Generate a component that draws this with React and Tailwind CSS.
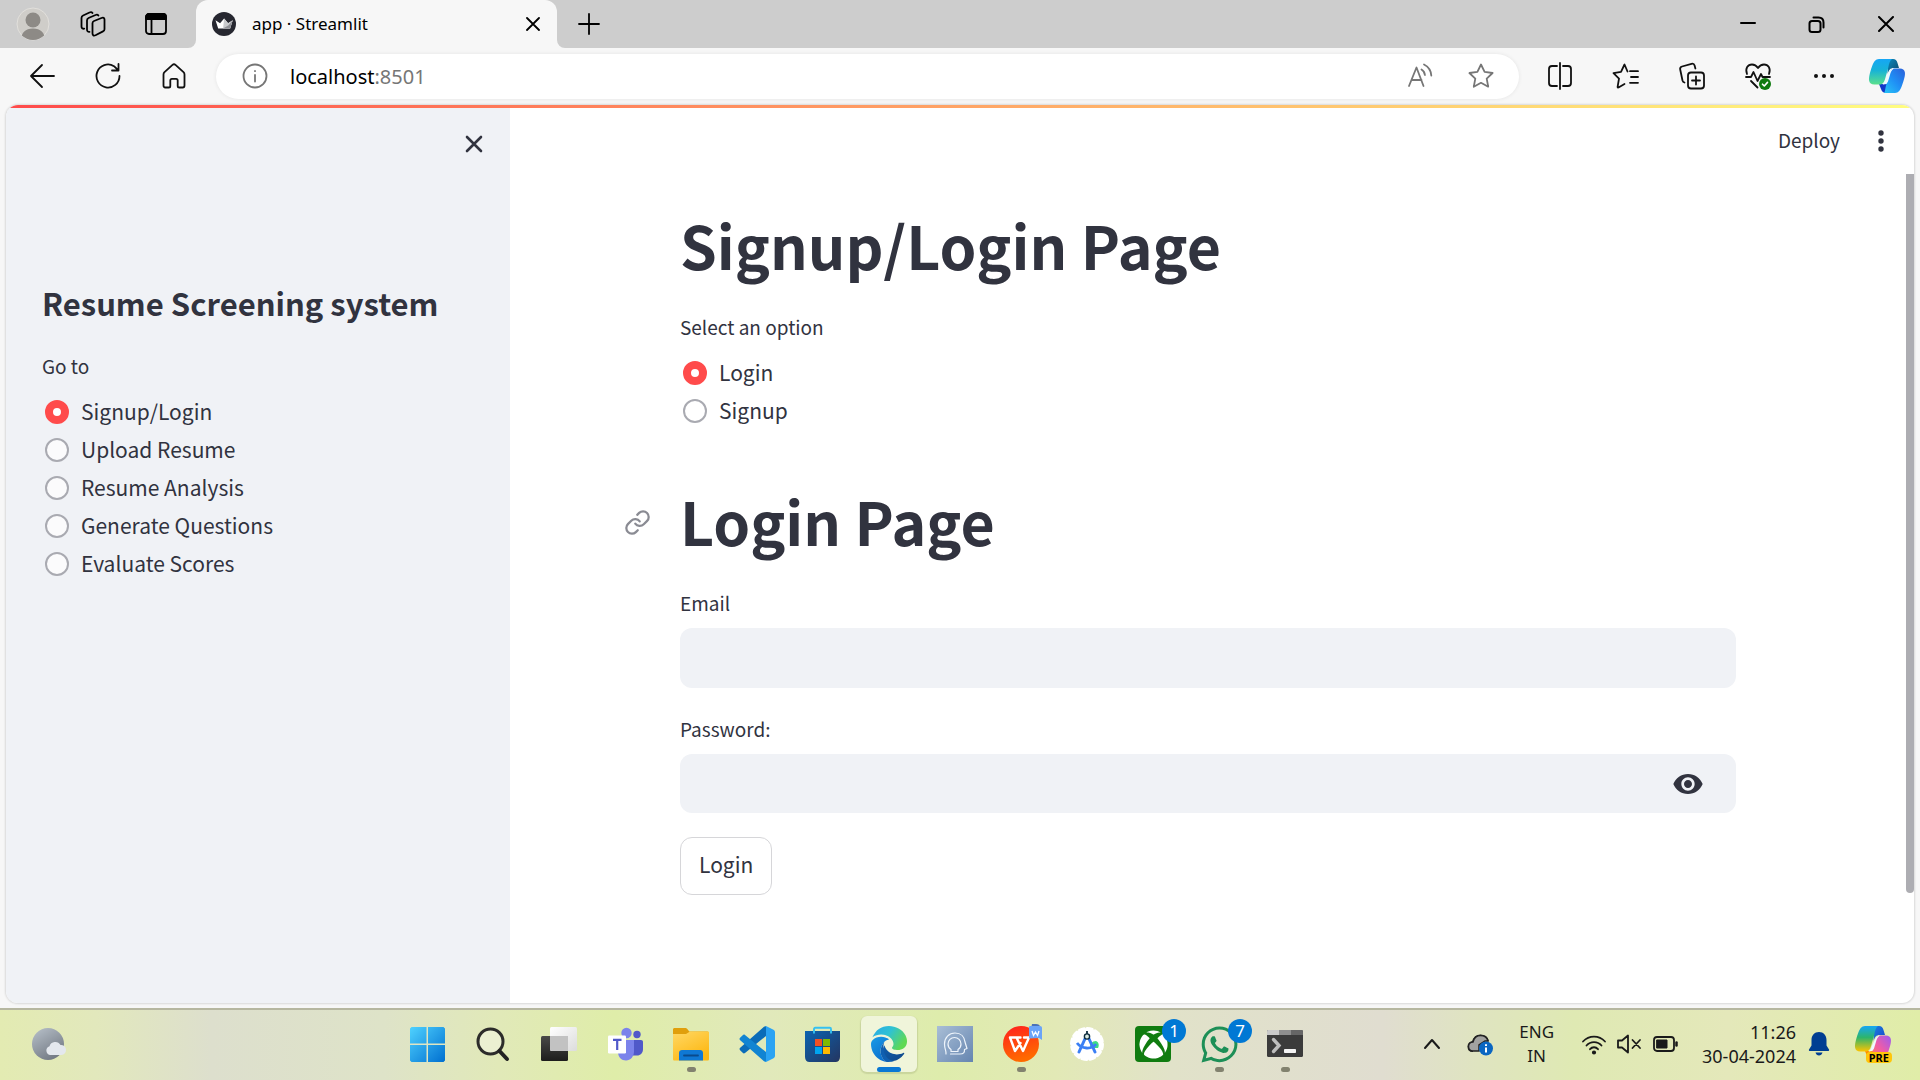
import React, { useState } from "react";
import { Link as LinkIcon } from "lucide-react";
import { FaWhatsapp, FaXbox } from "react-icons/fa";
import { MdVisibility } from "react-icons/md";

function Line({ size = 28, w = 1.8, className = "", children, box = 28 }) {
  return (
    <svg
      width={size}
      height={size}
      viewBox={`0 0 ${box} ${box}`}
      fill="none"
      stroke="currentColor"
      strokeWidth={w}
      strokeLinecap="round"
      strokeLinejoin="round"
      className={className}
      aria-hidden="true"
    >
      {children}
    </svg>
  );
}

function IconButton({ label, className = "", children }) {
  return (
    <button type="button" aria-label={label} className={`flex h-12 shrink-0 items-center justify-center ${className}`}>
      {children}
    </button>
  );
}

/* ---------- Browser chrome ---------- */

function Avatar() {
  return (
    <svg width="34" height="34" viewBox="0 0 34 34" aria-hidden="true">
      <defs>
        <clipPath id="avatar">
          <circle cx="17" cy="17" r="16" />
        </clipPath>
      </defs>
      <circle cx="17" cy="17" r="16" fill="#cfcdc9" stroke="#e2e0dc" />
      <g clipPath="url(#avatar)" fill="#8d8a86">
        <circle cx="17" cy="13" r="7.5" />
        <path d="M5 34c0-8 4-12.500 12-12.500S29 26 29 34z" />
      </g>
    </svg>
  );
}

function StreamlitCrown() {
  return (
    <svg width="24" height="24" viewBox="0 0 24 24" aria-hidden="true">
      <circle cx="12" cy="12" r="12" fill="#262730" />
      <path d="M3.500 8.200l4.600 3 4-4.700 4 4.700 4.600-3-2.600 8.300H6.200z" fill="#fff" />
      <path d="M12.100 6.500l4 4.700 4.600-3-2.600 8.300h-7z" fill="#c9cacd" />
      <path d="M20.700 8.200l-2.600 8.300h-7l5.500-3.300z" fill="#8f9096" />
    </svg>
  );
}

function TabBar() {
  return (
    <div className="flex h-12 items-center bg-[#cdcdcd] text-black">
      <IconButton label="Profile" className="ml-4 w-[34px]"><Avatar /></IconButton>
      <IconButton label="Workspaces" className="ml-7 w-[30px]">
        <Line size={26} box={26}>
          <path d="M12.500 12.200c0-1.100.5-1.800 1.500-2.200l7.500-3c1.700-.7 3-.1 3 1.600v9.600c0 1.100-.5 1.800-1.500 2.200l-7.500 3.800c-1.800.8-3 .1-3-1.600z" />
          <path d="M9.500 20.800c-1.500.2-2.500-.6-2.500-2.200V9.500c0-1.200.5-2 1.600-2.500l6.900-3c1.300-.6 2.300-.3 2.900.6" />
          <path d="M4.200 17.700C2.500 17.900 1.500 17 1.500 15.400V7c0-1.200.5-2 1.600-2.500l6.400-3c1.300-.6 2.400-.3 3 .5" />
        </Line>
      </IconButton>
      <IconButton label="Tab actions" className="ml-9 w-6">
        <Line size={24} box={24}>
          <rect x="2" y="2" width="20" height="20" rx="3" />
          <path d="M2 7V5a3 3 0 013-3h14a3 3 0 013 3v2z" fill="currentColor" />
          <path d="M7.500 8v13.500" />
        </Line>
      </IconButton>
      <div className="ml-5 h-2 w-2 self-end overflow-hidden bg-[#f7f7f7]">
        <div className="h-2 w-2 rounded-br-lg bg-[#cdcdcd]" />
      </div>
      <div className="flex h-12 w-[361px] items-center rounded-t-xl bg-[#f7f7f7] pr-3 pl-4">
        <StreamlitCrown />
        <span className="ml-4 flex-1 text-[17px]">app · Streamlit</span>
        <button type="button" aria-label="Close tab" className="flex h-6 w-6 items-center justify-center">
          <Line size={14} box={14}><path d="M1 1l12 12M13 1L1 13" /></Line>
        </button>
      </div>
      <div className="h-2 w-2 self-end overflow-hidden bg-[#f7f7f7]">
        <div className="h-2 w-2 rounded-bl-lg bg-[#cdcdcd]" />
      </div>
      <IconButton label="New tab" className="ml-2 w-8">
        <Line size={22} box={22}><path d="M11 1v20M1 11h20" /></Line>
      </IconButton>
      <div className="ml-auto flex">
        <IconButton label="Minimize" className="w-[69px]">
          <Line size={16} box={16} w={2}><path d="M1 7h14" /></Line>
        </IconButton>
        <IconButton label="Restore" className="w-[69px]">
          <Line size={17} box={17} w={2}>
            <rect x="1.500" y="5" width="11" height="11" rx="2.500" />
            <path d="M5.500 1.500h5c3 0 5 2 5 5v5" />
          </Line>
        </IconButton>
        <IconButton label="Close window" className="w-[69px]">
          <Line size={16} box={16} w={2}><path d="M1 1l14 14M15 1L1 15" /></Line>
        </IconButton>
      </div>
    </div>
  );
}

function CopilotLogo({ colorful = false }) {
  const p = colorful ? "c" : "b";
  return (
    <svg width="38" height="36" viewBox="0 0 38 36" aria-hidden="true">
      <defs>
        <linearGradient id={`${p}1`} x1="0" y1="0" x2="0" y2="1">
          <stop offset="0" stopColor="#16a6f5" />
          <stop offset=".45" stopColor={colorful ? "#2db56b" : "#18b3d6"} />
          <stop offset="1" stopColor={colorful ? "#ffc400" : "#5be08c"} />
        </linearGradient>
        <linearGradient id={`${p}2`} x1="1" y1="0" x2="0" y2="1">
          <stop offset="0" stopColor={colorful ? "#9a5cf0" : "#2b5fd9"} />
          <stop offset=".5" stopColor={colorful ? "#ee5ca8" : "#1f8ff5"} />
          <stop offset="1" stopColor={colorful ? "#ff8a4c" : "#29c5f6"} />
        </linearGradient>
        <linearGradient id={`${p}3`} x1="0" y1="0" x2="1" y2="1">
          <stop offset="0" stopColor={colorful ? "#1a7fe0" : "#0c8bc0"} />
          <stop offset="1" stopColor={colorful ? "#1a46c8" : "#0c4468"} />
        </linearGradient>
      </defs>
      <path d="M11 26h10l-3 9c-2.500 0-4.200-1.500-5-4z" fill={colorful ? "#ff8a00" : "#1238c9"} />
      <path d="M20 1h5c2.500 0 3.800 1.500 4.500 4l1.500 5h-5c-4 0-5 2-6.500 6z" fill={`url(#${p}3)`} />
      <path d="M24 1H11C7.500 1 5.500 4 4 8.500 2 14 .5 20 1.200 23c.5 2.200 2 3.500 5 3.500h5c3.500 0 4.800-2 6-6l3-10.500C21 5.500 22 2 24 1z" fill={`url(#${p}1)`} />
      <path d="M16 35h11c3.500 0 5.500-3 7-7.500 2-5.500 3.500-10.500 2.800-13.500-.5-2.200-2-3.500-5-3.500h-5c-3.500 0-4.800 2-6 6L18 27.500C17 31.500 17 34 16 35z" fill={`url(#${p}2)`} />
      <path d="M20.500 15.500c1-3 2.500-5 5.500-5-2.500 1.300-3.200 3.500-4.200 7l-1.500 5c-1.100 3.500-2.500 4-5.800 4 1.800-1 2.500-2.700 3.300-5.500z" fill="#eefaff" />
    </svg>
  );
}

function Toolbar() {
  return (
    <div className="flex h-[57px] items-center bg-[#f7f7f7] pb-px text-[#111]">
      <IconButton label="Back" className="ml-5 w-11">
        <Line size={26} box={26}><path d="M25 13H2M13 2L2 13l11 11" /></Line>
      </IconButton>
      <IconButton label="Refresh" className="ml-[22px] w-11">
        <Line size={26} box={26}>
          <path d="M24.500 13A11.500 11.500 0 1119 3.200L23.500 7.500M23.500 1v6.500H17" />
        </Line>
      </IconButton>
      <IconButton label="Home" className="ml-[22px] w-11">
        <Line size={26} box={26}>
          <path d="M2.500 11.500c0-1 .4-1.700 1-2.300l8-7.300c1-.9 2-.9 3 0l8 7.300c.6.6 1 1.300 1 2.300V22.500c0 1.200-.6 2-1.800 2h-3.400c-1 0-1.600-.6-1.600-1.600V17.500c0-1-.6-1.600-1.600-1.600h-4.200c-1 0-1.600.6-1.600 1.600v5.400c0 1-.6 1.600-1.600 1.600H4.300c-1.200 0-1.800-.8-1.800-2z" />
        </Line>
      </IconButton>
      <div className="ml-5 flex h-[45px] flex-1 items-center rounded-full bg-white pr-6 pl-[26px] text-[#767676] shadow-[0_0_4px_rgba(0,0,0,0.08)]">
        <button type="button" aria-label="View site information">
          <Line size={26} box={26}>
            <circle cx="13" cy="13" r="11.500" />
            <path d="M13 12v6.500M13 8v.2" />
          </Line>
        </button>
        <span className="ml-[22px] flex-1 pt-px text-[20px] leading-7">
          <span className="text-black">localhost</span>:8501
        </span>
        <button type="button" aria-label="Read aloud" className="mr-[34px]">
          <Line size={26} box={26}>
            <path d="M2 23L9.500 4.500 16.500 23M4.500 17h10" />
            <path d="M14.500 6.500c2 1.200 3.200 3 3.400 5.500M17 1.500c4.500 2.300 7 6 7.300 11" />
          </Line>
        </button>
        <button type="button" aria-label="Favorite this page">
          <Line size={28} box={28}>
            <path d="M14 2.500l3.600 7.400 8 1.100-5.900 5.600 1.500 8.100-7.200-3.900-7.200 3.900 1.500-8.100L2.400 11l8-1.100z" />
          </Line>
        </button>
      </div>
      <IconButton label="Split screen" className="ml-[19px] w-11">
        <Line size={28}>
          <path d="M11 4H6a3 3 0 00-3 3v14a3 3 0 003 3h5M17 4h5a3 3 0 013 3v14a3 3 0 01-3 3h-5M14 1v26" />
        </Line>
      </IconButton>
      <IconButton label="Favorites" className="ml-[22px] w-11">
        <Line size={28}>
          <path d="M18 9.200h8M19 15h7M18 20.800h8M15.500 9.500l-3-7-3.500 7.400-7.500 1.200 5.500 5.500-1.400 8.300c0 .6.300.8.900.6l6-3.500" />
        </Line>
      </IconButton>
      <IconButton label="Collections" className="ml-[22px] w-11">
        <Line size={28}>
          <rect x="10" y="10.500" width="16" height="16" rx="3" />
          <path d="M18 14.500v8M14 18.500h8M6.500 20.500c-1-.3-1.700-1-2-2L2.200 7.500c-.3-1.500.4-2.600 1.800-3l9.500-2.700c1.500-.4 2.700.3 3.100 1.700l.8 3" />
        </Line>
      </IconButton>
      <IconButton label="Browser essentials" className="ml-[22px] w-11">
        <Line size={28}>
          <path d="M3 12C.8 6 4 2.500 8 2.500c2.500 0 4.500 1.300 6 3.500 1.500-2.200 3.500-3.500 6-3.500 4 0 7.200 3.500 5 9.500" />
          <path d="M2 15h5l2.500-5 4 9 3.500-7 1.500 3H26M7 19l6.500 6.500" />
          <circle cx="21" cy="22" r="6" fill="#0f7b0f" stroke="none" />
          <path d="M18.500 22.200l1.800 1.800 3.200-3.600" stroke="#fff" strokeWidth="1.600" />
        </Line>
      </IconButton>
      <IconButton label="Settings and more" className="ml-[22px] w-11">
        <svg width="22" height="6" viewBox="0 0 22 6" fill="currentColor" aria-hidden="true">
          <circle cx="3" cy="3" r="2" /><circle cx="11" cy="3" r="2" /><circle cx="19" cy="3" r="2" />
        </svg>
      </IconButton>
      <IconButton label="Copilot" className="mr-3.5 ml-[22px] w-[38px]"><CopilotLogo /></IconButton>
    </div>
  );
}

/* ---------- App ---------- */

function RadioGroup({ name, label, options }) {
  const [value, setValue] = useState(options[0]);
  return (
    <fieldset>
      <legend className="text-[19px] leading-7">{label}</legend>
      <div className="mt-[13px] pl-[3px]">
        {options.map((o) => (
          <label key={o} className="flex h-[38px] items-center gap-3 text-[21px] leading-8">
            <input
              type="radio"
              name={name}
              checked={value === o}
              onChange={() => setValue(o)}
              className="h-6 w-6 shrink-0 appearance-none rounded-full border-2 border-[#a9aab1] bg-white/70 checked:border-8 checked:border-[#ff4b4b] checked:bg-white"
            />
            <span className="pb-0.5">{o}</span>
          </label>
        ))}
      </div>
    </fieldset>
  );
}

function Sidebar() {
  return (
    <aside className="w-[504px] shrink-0 bg-[#f0f2f6] px-9 text-[#31333f]">
      <div className="flex h-[72px] items-center justify-end">
        <button type="button" aria-label="Close sidebar" className="-mr-4 flex h-8 w-8 items-center justify-center">
          <Line size={18} box={18} w={2.6}><path d="M2 2l14 14M16 2L2 16" /></Line>
        </button>
      </div>
      <h1 className="mt-[99px] text-[31px] leading-[48px] font-semibold">Resume Screening system</h1>
      <div className="mt-[25px]">
        <RadioGroup
          name="page"
          label="Go to"
          options={["Signup/Login", "Upload Resume", "Resume Analysis", "Generate Questions", "Evaluate Scores"]}
        />
      </div>
    </aside>
  );
}

function Main() {
  const [show, setShow] = useState(false);
  return (
    <main className="flex min-w-0 flex-1 flex-col text-[#31333f]">
      <header className="flex h-[66px] items-center justify-end pr-6">
        <button type="button" className="pb-0.5 text-[19px] leading-7">Deploy</button>
        <button type="button" aria-label="Main menu" className="ml-8 flex h-8 w-[18px] items-center justify-center">
          <svg width="6" height="22" viewBox="0 0 6 22" fill="currentColor" aria-hidden="true">
            <circle cx="3" cy="3" r="2.700" /><circle cx="3" cy="11" r="2.700" /><circle cx="3" cy="19" r="2.700" />
          </svg>
        </button>
      </header>
      <div className="flex flex-1">
        <div className="flex-1">
          <div className="mx-auto w-full max-w-[1056px] pt-[31px]">
            <h1 className="text-[59px] leading-20 font-bold">Signup/Login Page</h1>
            <div className="mt-7">
              <RadioGroup name="mode" label="Select an option" options={["Login", "Signup"]} />
            </div>
            <div className="relative mt-[51px]">
              <a href="#login-page" aria-label="Link to heading" className="absolute top-7 -left-14 text-[#8a8b93]">
                <LinkIcon size={27} strokeWidth={2} />
              </a>
              <h1 id="login-page" className="text-[59px] leading-20 font-bold">Login Page</h1>
            </div>
            <form onSubmit={(e) => e.preventDefault()}>
              <label htmlFor="email" className="mt-7 block text-[19px] leading-7">Email</label>
              <input id="email" type="text" className="mt-[11px] block h-[60px] w-full rounded-xl bg-[#f0f2f6] px-5 text-[21px] outline-none" />
              <label htmlFor="password" className="mt-[27px] block text-[19px] leading-7">Password:</label>
              <div className="mt-[11px] flex h-[59px] items-center rounded-xl bg-[#f0f2f6] pr-8">
                <input id="password" type={show ? "text" : "password"} className="h-full min-w-0 flex-1 bg-transparent px-5 text-[21px] outline-none" />
                <button type="button" aria-label="Show password" onClick={() => setShow(!show)}>
                  <MdVisibility size={32} />
                </button>
              </div>
              <button type="submit" className="mt-6 h-[58px] rounded-xl border border-[#d6d6d9] px-[18px] pb-1 text-[21px] leading-8">Login</button>
            </form>
          </div>
        </div>
        <div className="w-2">
          <div className="h-[719px] rounded-b-full bg-[#adadb2]" />
        </div>
      </div>
    </main>
  );
}

/* ---------- Taskbar ---------- */

function Weather() {
  return (
    <svg width="36" height="34" viewBox="0 0 36 34" aria-hidden="true">
      <defs>
        <linearGradient id="moon" x1="0" y1="0" x2=".6" y2="1">
          <stop offset="0" stopColor="#b9c2cb" /><stop offset="1" stopColor="#747b85" />
        </linearGradient>
      </defs>
      <circle cx="16" cy="17" r="16" fill="url(#moon)" />
      <path d="M18 28a4.500 4.500 0 01-.5-8.700A6 6 0 0128.500 18a5 5 0 011 10z" fill="#e4e8ee" />
    </svg>
  );
}

function WindowsLogo() {
  return (
    <svg width="35" height="35" viewBox="0 0 35 35" aria-hidden="true">
      <defs>
        <linearGradient id="win" gradientUnits="userSpaceOnUse" x1="0" y1="0" x2="35" y2="35">
          <stop offset="0" stopColor="#4fd2ff" /><stop offset="1" stopColor="#006fd0" />
        </linearGradient>
      </defs>
      <path d="M1.500 0H16.500V16.500H0V1.500zM18 0H33.500L35 1.500V16.500H18zM0 18H16.500V35H1.500L0 33.500zM18 18H35V33.500L33.500 35H18z" fill="url(#win)" />
    </svg>
  );
}

function SearchLogo() {
  return (
    <svg width="34" height="36" viewBox="0 0 34 36" aria-hidden="true">
      <circle cx="14.500" cy="15.500" r="12.500" fill="#ffffff" fillOpacity=".35" stroke="#2c2c2a" strokeWidth="3" />
      <path d="M23.500 25l7.500 8" stroke="#222" strokeWidth="4" strokeLinecap="round" />
    </svg>
  );
}

function TaskView() {
  return (
    <svg width="36" height="36" viewBox="0 0 36 36" aria-hidden="true">
      <defs>
        <linearGradient id="tvd" x1="0" y1="0" x2="0" y2="1">
          <stop offset="0" stopColor="#4a4a48" /><stop offset="1" stopColor="#1d1d1c" />
        </linearGradient>
        <linearGradient id="tvl" x1="0" y1="0" x2="1" y2="1">
          <stop offset="0" stopColor="#fff" /><stop offset="1" stopColor="#dcdcdc" />
        </linearGradient>
      </defs>
      <rect x="0" y="10" width="27" height="25" rx="1.500" fill="url(#tvd)" />
      <rect x="9" y="1" width="27" height="24" rx="1.500" fill="url(#tvl)" />
      <path d="M9 10h18v15H10.500L9 23.500z" fill="#c2c2c2" />
    </svg>
  );
}

function Teams() {
  return (
    <svg width="36" height="36" viewBox="0 0 36 36" aria-hidden="true">
      <circle cx="30" cy="8.500" r="3.700" fill="#5059c9" />
      <path d="M26 14h8c1.200 0 2 .8 2 2v7c0 4-2.500 6.500-6 6.500h-4z" fill="#5059c9" />
      <circle cx="19.500" cy="7" r="5.200" fill="#7b83eb" />
      <path d="M11 14h16v11.500c0 5-3.500 9-8 9s-8-3.500-8-8.500z" fill="#7b83eb" />
      <rect x="1" y="9.500" width="18" height="18" rx="1.200" fill="#fff" />
      <path d="M6 13.800h8.500M10.200 14v10" stroke="#5059c9" strokeWidth="2.200" />
    </svg>
  );
}

function Explorer() {
  return (
    <svg width="36" height="36" viewBox="0 0 36 36" aria-hidden="true">
      <defs>
        <linearGradient id="fold" x1="0" y1="0" x2=".6" y2="1">
          <stop offset="0" stopColor="#ffd865" /><stop offset="1" stopColor="#fdb813" />
        </linearGradient>
      </defs>
      <path d="M0 3.500C0 2.500.8 2 1.500 2H12c1 0 1.600.2 2.300 1l2 2.500H34c1 0 1.500.6 1.500 1.500v6H0z" fill="#e09f0c" />
      <path d="M0 8h13l4-2.500h18c.6 0 1 .4 1 1V33c0 1-.6 1.500-1.500 1.500h-33C.6 34.500 0 34 0 33z" fill="url(#fold)" />
      <path d="M6 34.500V27c0-2 1.200-3 3-3h18c1.800 0 3 1 3 3v7.500z" fill="#0f78d4" />
      <path d="M11 29.500h14" stroke="#0a4a8c" strokeWidth="1.800" strokeLinecap="round" />
    </svg>
  );
}

function VSCode() {
  return (
    <svg width="36" height="36" viewBox="0 0 36 36" aria-hidden="true">
      <path d="M27 0v10L6 27c-.8.600-1.600.500-2.300-.2l-2.600-2.500c-.8-.8-.7-1.800.1-2.500L25 .8z" fill="#0b6cb8" />
      <path d="M27 36V26L6 9c-.8-.6-1.600-.5-2.300.2l-2.600 2.500c-.8.800-.7 1.800.1 2.500L25 35.200z" fill="#1184d2" />
      <path d="M25 .6c1-.6 1.600-.7 2.500-.3l7 3.500c.9.500 1.500 1.300 1.500 2.400v23.600c0 1.100-.6 1.900-1.500 2.400l-7 3.500c-.9.400-1.500.3-2.500-.3 1.200.7 2 .2 2-1.400V2c0-1.600-.8-2.100-2-1.400z" fill="#2ba3f3" />
    </svg>
  );
}

function Store() {
  return (
    <svg width="36" height="36" viewBox="0 0 36 36" aria-hidden="true">
      <defs>
        <linearGradient id="bag" x1="0" y1="0" x2="1" y2="1">
          <stop offset="0" stopColor="#0b63b0" /><stop offset="1" stopColor="#243560" />
        </linearGradient>
      </defs>
      <path d="M0 5h35v26c0 3-1.800 5-4.500 5h-26C1.800 36 0 34 0 31z" fill="url(#bag)" />
      <path d="M9 7.500V3c0-.8.500-1.200 1.200-1.200h14.600c.7 0 1.200.4 1.200 1.200v4.500" fill="none" stroke="#35c1f1" strokeWidth="1.900" />
      <path fill="#f25022" d="M10 13h7v7h-7z" /><path fill="#7fba00" d="M18 13h7v7h-7z" />
      <path fill="#00a4ef" d="M10 21h7v7h-7z" /><path fill="#ffb900" d="M18 21h7v7h-7z" />
    </svg>
  );
}

function EdgeLogo() {
  return (
    <svg width="36" height="36" viewBox="0 0 24 24" aria-hidden="true">
      <defs>
        <linearGradient id="e1" x1="0" y1="0" x2="1" y2=".5">
          <stop offset="0" stopColor="#2aa9e8" /><stop offset=".5" stopColor="#2fc2d3" /><stop offset="1" stopColor="#5fd953" />
        </linearGradient>
        <linearGradient id="e2" x1="0" y1="0" x2=".6" y2="1">
          <stop offset="0" stopColor="#1a9be6" /><stop offset="1" stopColor="#0a6fce" />
        </linearGradient>
        <linearGradient id="e3" x1="0" y1="0" x2="1" y2="1">
          <stop offset="0" stopColor="#0f5fb0" /><stop offset="1" stopColor="#0f4585" />
        </linearGradient>
      </defs>
      <path d="M21.860 17.860q.14 0 .25.12.1.13.1.25t-.11.33l-.32.46-.43.53-.44.5q-.25.26-.38.37l-.22.23q-.58.53-1.34 1.040-.76.51-1.600.91-.86.4-1.740.64t-1.670.24q-.9 0-1.690-.28-.8-.28-1.480-.78-.68-.5-1.220-1.170-.53-.66-.92-1.440-.38-.77-.58-1.600-.2-.83-.2-1.670 0-1 .32-1.960.33-.97.87-1.800.14.95.55 1.770.41.82 1.020 1.500.6.68 1.380 1.210.78.54 1.640.9.86.36 1.770.56.92.2 1.800.2 1.120 0 2.180-.24 1.060-.23 2.060-.72l.2-.1.2-.05z" fill="url(#e3)" />
      <path d="M6.360 16.590q0 1.100.27 2.150.27 1.060.78 2.030.51.96 1.240 1.770.74.82 1.660 1.400-1.470-.2-2.800-.74-1.330-.55-2.480-1.370-1.150-.83-2.080-1.900-.92-1.070-1.580-2.330T.36 14.940Q0 13.540 0 12.060q0-.81.32-1.490.31-.68.83-1.230.53-.55 1.200-.96.66-.4 1.350-.66.74-.27 1.500-.39.78-.12 1.550-.12.7 0 1.420.1.72.12 1.400.35.68.23 1.320.57.63.35 1.160.83-.35 0-.7.07-.33.07-.65.23v-.02q-.63.28-1.200.74-.57.46-1.050 1.040-.48.58-.87 1.260-.38.67-.65 1.390-.27.71-.42 1.440-.15.72-.15 1.380z" fill="url(#e2)" />
      <path d="M6.360 16.590c0-2 1-4.400 2.500-6 0 0-.6 1.500-.6 3.800 0 4.500 3 8.900 7.300 8.900-1.500.6-3.400.8-5.240.65-2.500-1.500-3.960-4.500-3.960-7.350z" fill="#0f5fb0" />
      <path d="M11.960.06q1.700 0 3.330.39 1.630.38 3.070 1.150 1.430.77 2.620 1.930 1.180 1.160 1.980 2.700.49.94.76 1.960.28 1 .28 2.080 0 .89-.23 1.700-.24.8-.69 1.480-.45.68-1.100 1.220-.64.53-1.450.88-.54.24-1.110.36-.58.13-1.160.13-.42 0-.97-.03-.54-.03-1.100-.12-.55-.1-1.050-.28-.5-.19-.84-.5-.12-.09-.23-.24-.1-.16-.1-.33 0-.15.16-.35.16-.2.35-.5.2-.28.36-.68.16-.4.16-.95 0-1.060-.4-1.960-.4-.91-1.060-1.640-.66-.74-1.520-1.280-.86-.55-1.790-.89-.84-.3-1.720-.44-.87-.14-1.760-.14-1.550 0-3.060.45T.94 7.550q.71-1.740 1.810-3.130 1.100-1.380 2.520-2.350Q6.680 1.100 8.370.58q1.700-.52 3.580-.52Z" fill="url(#e1)" />
    </svg>
  );
}

function HeadApp() {
  return (
    <svg width="36" height="36" viewBox="0 0 36 36" aria-hidden="true">
      <defs>
        <linearGradient id="head" x1="0" y1="0" x2="1" y2="1">
          <stop offset="0" stopColor="#a9bed6" /><stop offset="1" stopColor="#6585b0" />
        </linearGradient>
      </defs>
      <path fill="url(#head)" d="M0 0h36v36H0z" />
      <g fill="none" stroke="#eef4fb" strokeWidth="1.200" strokeLinecap="round" strokeLinejoin="round">
        <path d="M9 28c.5-3-1.500-5-1.500-10C7.500 11.500 12 7 18 7s9.500 4 10 9l2 6.500-2.500 1c.2 3-1 4.500-4.500 4.500H13.500" />
        <path d="M14 25.500v-2c-2-1.200-3-3-3-5.500a6.500 6.500 0 0113 0c0 2.500-1 4.300-3 5.500v2z" />
      </g>
    </svg>
  );
}

function Wps() {
  return (
    <svg width="42" height="42" viewBox="0 0 42 42" aria-hidden="true">
      <defs>
        <linearGradient id="wps" x1="0" y1="0" x2=".3" y2="1">
          <stop offset="0" stopColor="#ff1f1f" /><stop offset="1" stopColor="#ff6a00" />
        </linearGradient>
      </defs>
      <circle cx="21" cy="21" r="18" fill="url(#wps)" />
      <path d="M10 14.500h10.500M10 14.500l5 13.500 5.500-8M20.500 14.500h-4.500M16.500 14.500l6.500 13.500 6-13.500H24" fill="none" stroke="#fff" strokeWidth="2.400" strokeLinejoin="round" strokeLinecap="round" />
      <path d="M32 1h4c2.500 0 4 1 4 3v2h-9z" fill="#4b72b8" />
      <path d="M30 3h10c1.300 0 2 .8 2 2v12l-3-2-10 .5V5c0-1.200 0-2 1-2z" fill="#6ba4f8" />
      <path d="M32 8l1.500 4.500 2-3.500 2 3.500L39 8" fill="none" stroke="#fff" strokeWidth="1.300" />
    </svg>
  );
}

function AndroidStudio() {
  return (
    <svg width="36" height="36" viewBox="0 0 36 36" aria-hidden="true">
      <circle cx="18" cy="18" r="15.500" fill="#fff" />
      <circle cx="18" cy="18" r="15.500" fill="none" stroke="#fff" strokeWidth="3" strokeDasharray="5 3.100" strokeLinecap="round" />
      <path d="M21 22a6 6 0 016-7c2.500 1 3.500 4 2 7z" fill="#3ddc84" />
      <path d="M16.800 11L10 26M19.200 11L26 26" stroke="#3b7ff5" strokeWidth="3" strokeLinecap="round" />
      <path d="M8 17c4.500 6 14.500 7 19 1" fill="none" stroke="#3b7ff5" strokeWidth="2.800" />
      <circle cx="18" cy="10.500" r="2.600" fill="#dcebe2" stroke="#0c2b3c" strokeWidth="1.400" />
      <path d="M18 5v3" stroke="#0c2b3c" strokeWidth="1.800" />
    </svg>
  );
}

function XboxIcon() {
  return (
    <span className="flex h-9 w-9 items-center justify-center rounded-sm bg-[#107c10] text-white">
      <FaXbox size={29} />
    </span>
  );
}

function Terminal() {
  return (
    <svg width="36" height="36" viewBox="0 0 36 36" aria-hidden="true">
      <rect x="0" y="4" width="36" height="27" rx="1.500" fill="#3b3b3b" />
      <path d="M0 9V5.500C0 4.600.6 4 1.500 4H12v5z" fill="#c9c9c9" />
      <path d="M12 4h12v5H12z" fill="#8e8e8e" /><path d="M24 4h10.500c.9 0 1.500.6 1.500 1.500V9H24z" fill="#666" />
      <path d="M6.500 13.500l5.500 6-5.500 6" fill="none" stroke="#bdbdbd" strokeWidth="3.400" strokeLinecap="round" />
      <rect x="17" y="23" width="12" height="4" rx=".8" fill="#f4f4f4" />
    </svg>
  );
}

const APPS = [
  { name: "Start", icon: <WindowsLogo /> },
  { name: "Search", icon: <SearchLogo /> },
  { name: "Task view", icon: <TaskView /> },
  { name: "Microsoft Teams", icon: <Teams /> },
  { name: "File Explorer", icon: <Explorer />, running: true },
  { name: "Visual Studio Code", icon: <VSCode /> },
  { name: "Microsoft Store", icon: <Store /> },
  { name: "Microsoft Edge", icon: <EdgeLogo />, active: true },
  { name: "Assistant", icon: <HeadApp /> },
  { name: "WPS Office", icon: <Wps />, running: true },
  { name: "Android Studio", icon: <AndroidStudio /> },
  { name: "Xbox", icon: <XboxIcon />, badge: "1" },
  { name: "WhatsApp", icon: <FaWhatsapp size={41} color="#1d8f57" />, badge: "7", running: true },
  { name: "Terminal", icon: <Terminal />, running: true },
];

function AppButton({ app }) {
  return (
    <button
      type="button"
      aria-label={app.name}
      className={`relative mx-[5px] flex h-14 w-14 shrink-0 items-center justify-center rounded-md ${
        app.active ? "bg-[#f0f5da] shadow-[0_1px_1px_1px_rgba(120,130,80,0.2)]" : ""
      }`}
    >
      {app.icon}
      {app.running && <span className="absolute bottom-0 left-6 h-[5px] w-[9px] rounded-full bg-[#82826f]" />}
      {app.active && <span className="absolute bottom-0 left-4 h-[5px] w-6 rounded-full bg-[#0a78d4]" />}
      {app.badge && (
        <span className="absolute top-[3px] right-[3px] -mr-2 flex h-6 w-6 items-center justify-center rounded-full bg-[#0078d4] text-[17px] leading-6 text-white">
          {app.badge}
        </span>
      )}
    </button>
  );
}

function Tray() {
  return (
    <div className="ml-auto flex items-center text-[17px] leading-6 text-[#1a1a1a]">
      <button type="button" aria-label="Show hidden icons" className="flex w-6 justify-center">
        <Line size={18} box={18} w={2}><path d="M2 13l7-8 7 8" /></Line>
      </button>
      <svg width="26" height="24" viewBox="0 0 26 24" className="ml-[23px]" aria-hidden="true">
        <path d="M6 19C3 19 1.500 17 1.500 14.500S3.500 10 6 10c1-4 4-6.500 7.500-6.500 4 0 6.500 2 7.500 5.500" fill="#a9a9a9" stroke="#222" strokeWidth="2" />
        <path d="M6 19h6v-6l6-4h3C20 5 17 3.500 13.500 3.500 10 3.500 7 6 6 10c-2.500 0-4.500 2-4.500 4.500S3 19 6 19z" fill="#a2a2a0" stroke="#222" strokeWidth="1.500" />
        <circle cx="19" cy="16.500" r="7" fill="#0a66c2" />
        <path d="M19 15.500v5M19 12.300v1.600" stroke="#fff" strokeWidth="2" />
      </svg>
      <button type="button" className="ml-[26px] text-center">ENG<br />IN</button>
      <Line size={26} box={26} className="ml-[27px]">
        <path d="M2 10.500c6-6.500 16-6.500 22 0M5.500 14.500c4-4.600 11-4.600 15 0M9 18.200c2.200-2.600 5.800-2.600 8 0" />
        <circle cx="13" cy="21.500" r="1.200" fill="currentColor" />
      </Line>
      <Line size={26} box={26} className="ml-[9px]">
        <path d="M2 9.500h4l6-5v17l-6-5H2zM16.500 9l7.500 8M24 9l-7.500 8" />
      </Line>
      <Line size={26} box={26} className="ml-2.5">
        <rect x="2" y="6" width="20" height="14" rx="3" />
        <path d="M5 9h10v8H5z" fill="currentColor" strokeWidth="1" />
        <path d="M24.500 11.500v3" strokeWidth="2.500" />
      </Line>
      <button type="button" className="ml-6 text-right text-[18px]">11:26<br />30-04-2024</button>
      <svg width="22" height="24" viewBox="0 0 22 24" fill="#003e92" className="ml-3" aria-hidden="true">
        <path d="M11 0c4.500 0 7.500 3.500 7.500 8v5.500l2.500 4c.4.900 0 1.500-1 1.500H2c-1 0-1.400-.6-1-1.500l2.500-4V8C3.500 3.500 6.500 0 11 0zM7.500 20.500h7c-.5 1.800-1.800 3-3.500 3s-3-1.200-3.500-3z" />
      </svg>
      <button type="button" aria-label="Copilot preview" className="relative mr-7 ml-6 flex h-[38px] w-[38px] items-start justify-center">
        <CopilotLogo colorful />
        <span className="absolute right-0 bottom-0 rounded-sm bg-[#ffc60a] px-[3px] text-[11px] leading-[11px] font-bold text-black">PRE</span>
      </button>
    </div>
  );
}

function Taskbar() {
  return (
    <footer className="flex h-18 items-center border-t-2 border-[#b6b7a0] bg-[linear-gradient(90deg,#e3ebb2_0%,#e2e8bc_5%,#dddfcd_11%,#dee3c8_20%,#e1e9b8_26%,#dfeda9_32%,#e1e9bb_40%,#deecac_49%,#e2e9b6_55%,#e1e2c9_61%,#e0ddd0_72%,#dfe4c0_77%,#dfe9b3_82%,#e4e8ba_90%,#e0eda8_100%)] pb-0.5">
      <div className="w-[394px] shrink-0 pl-8">
        <button type="button" aria-label="Weather" className="block"><Weather /></button>
      </div>
      <nav className="flex" aria-label="Taskbar">
        {APPS.map((a) => <AppButton key={a.name} app={a} />)}
      </nav>
      <Tray />
    </footer>
  );
}

export default function App() {
  return (
    <div className="flex min-h-screen flex-col bg-[#f7f7f7] font-['Noto_Sans',sans-serif]">
      <TabBar />
      <Toolbar />
      <div className="mx-1.5 mb-[5px] flex flex-1 flex-col overflow-hidden rounded-xl bg-white font-['Noto_Sans_CJK_SC',sans-serif] shadow-[0_0_2px_1px_rgba(0,0,0,0.12)]">
        <div className="h-[3px] bg-[linear-gradient(90deg,#ff4b4b,#fffd80)]" />
        <div className="flex flex-1">
          <Sidebar />
          <Main />
        </div>
      </div>
      <Taskbar />
    </div>
  );
}
